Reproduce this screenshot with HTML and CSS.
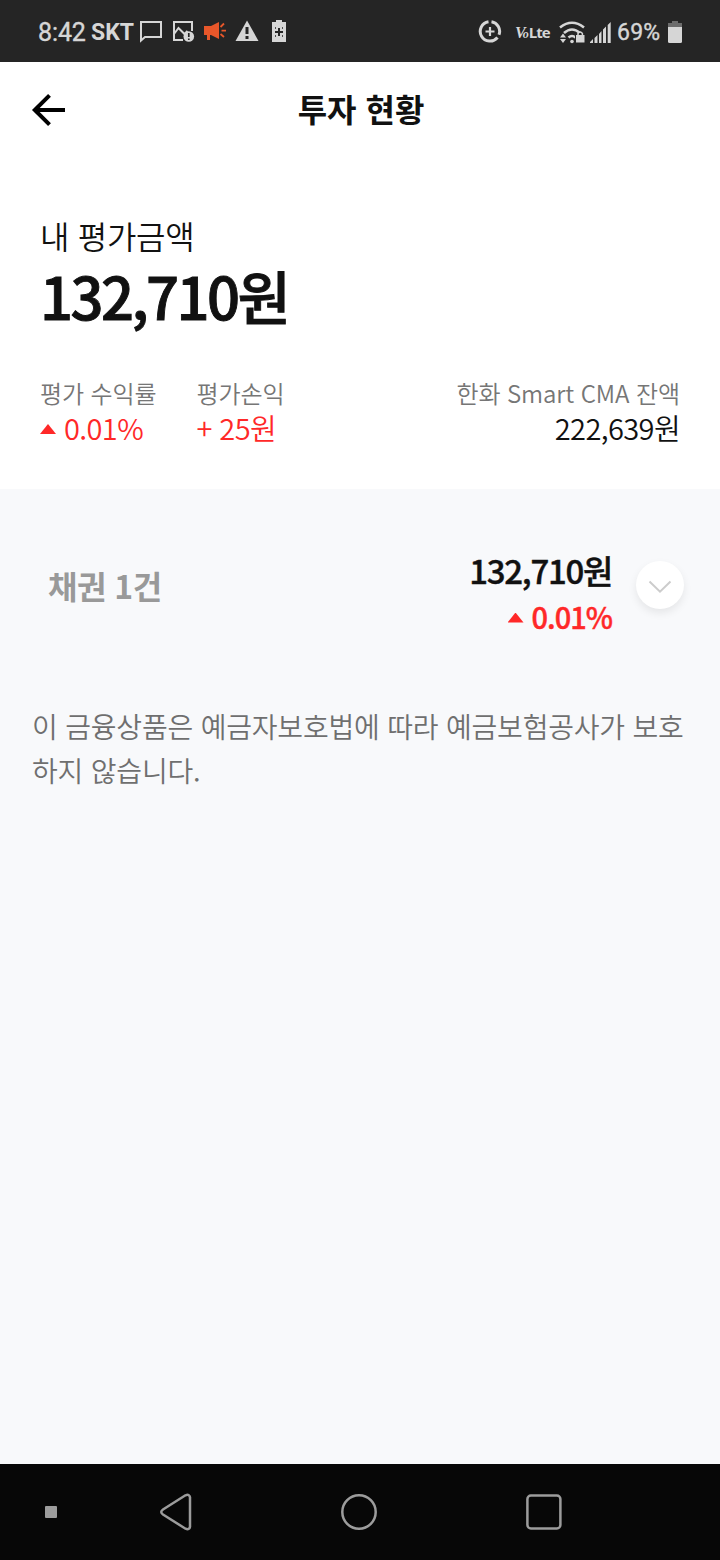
FILE: index.html
```html
<!DOCTYPE html>
<html lang="ko">
<head>
<meta charset="utf-8">
<title>투자 현황</title>
<link rel="stylesheet" href="styles.css">
</head>
<body>
<div class="statusbar">
  <span class="clock">8:42</span>
  <span class="carrier">SKT</span>
  <svg class="status-icons" width="150" height="24" viewBox="139 20 150 24">
    <path d="M141 22h20v15h-16l-4 3.500z" fill="none" stroke="#d6d6d6" stroke-width="2"/>
    <path d="M183 40h-9V22h18v9M174 34l4.500-6 6 6 3-3" fill="none" stroke="#d6d6d6" stroke-width="2"/>
    <circle cx="188.800" cy="36.500" r="5.300" fill="#d6d6d6"/>
    <path d="M188.800 33v4M188.800 38.500v1.500" stroke="#252525" stroke-width="1.700"/>
    <path d="M204 26h7l8-4v17l-8-4h-1v5h-3v-5h-3z" fill="#e8572a"/>
    <path d="M220.500 27l3.500-3.500M221.500 30.700h4.500M220.500 34l3.500 3" stroke="#e8572a" stroke-width="1.800"/>
    <path d="M247 20.500l11.500 20.500h-23z" fill="#d6d6d6"/>
    <path d="M247 27v7M247 36v3" stroke="#252525" stroke-width="3"/>
    <path d="M272 22h4v-2h6v2h4v20h-14z" fill="#d6d6d6"/>
    <path d="M275 32h8M279 28v8" stroke="#252525" stroke-width="2"/>
    <path d="M275 28h1M282 28h1M275 36h1M282 36h1" stroke="#252525" stroke-width="1.500"/>
  </svg>
  <svg class="status-radio" width="134" height="26" viewBox="478 18 134 26">
    <g fill="none" stroke="#d6d6d6">
      <path d="M491.500 20.800a9.700 9.700 0 0 1 7.500 13M497.500 36.500a9.700 9.700 0 1 1-9-15.700" stroke-width="3"/>
      <path d="M485.500 30.500h9M490 26v9" stroke-width="2.200"/>
    </g>
    <text x="515" y="37" class="volte"><tspan class="volte-v">V</tspan><tspan class="volte-o">o</tspan>Lte</text>
    <g fill="none" stroke="#d6d6d6" stroke-width="2.600">
      <path d="M560 26.500q12-9.500 24 0M564 32q8-7 16 0M568.500 36.500q3.500-3 7 0"/>
    </g>
    <circle cx="572" cy="40.500" r="1.800" fill="#d6d6d6"/>
    <path d="M560 36.500l3-4 3 4zM560 38l3 4 3-4z" fill="#d6d6d6"/>
    <path d="M575 32h10v10h-10z" fill="#252525"/>
    <path d="M576 34h8.500v7.500h-8.500z" fill="#d6d6d6"/>
    <path d="M578 34v-1.500q2.200-3 4.400 0V34" fill="none" stroke="#d6d6d6" stroke-width="1.500"/>
    <path d="M590 42v-1l3-3v4zM594.500 42v-5l3-3v8zM599 42v-9l2.500-3v12zM603 42v-13.500l3-3V42zM607.700 42V24l3-3v21z" fill="#d6d6d6"/>
  </svg>
  <span class="battery-level">69%</span>
  <svg class="battery" width="14" height="22" viewBox="0 0 14 22">
    <path d="M0 2h4V0h6v2h4v4H0z" fill="#6c6c6c"/>
    <path d="M0 6h14v14.500q0 1.500-1.500 1.500h-11Q0 22 0 20.500z" fill="#d6d6d6"/>
  </svg>
</div>

<header class="appbar">
  <svg class="back" width="34" height="34" viewBox="0 0 34 34">
    <path d="M18.500 2.300L3.800 17l14.700 14.700M4 17h30" fill="none" stroke="#000" stroke-width="4"/>
  </svg>
  <h1 class="title">투자 현황</h1>
</header>

<section class="summary">
  <div class="summary-label">내 평가금액</div>
  <div class="summary-total">132,710원</div>
  <div class="metrics">
    <div class="metric">
      <div class="metric-label">평가 수익률</div>
      <div class="metric-value up"><i class="triangle"></i>0.01%</div>
    </div>
    <div class="metric">
      <div class="metric-label">평가손익</div>
      <div class="metric-value up">+ 25원</div>
    </div>
    <div class="metric metric-end">
      <div class="metric-label">한화 Smart CMA 잔액</div>
      <div class="metric-value">222,639원</div>
    </div>
  </div>
</section>

<main class="holdings">
  <div class="group">
    <div class="group-name">채권 1건</div>
    <div class="group-values">
      <div class="group-total">132,710원</div>
      <div class="group-rate"><i class="triangle"></i>0.01%</div>
    </div>
    <button class="expand" aria-label="펼치기">
      <svg width="24" height="14" viewBox="0 0 24 14"><path d="M1.500 1.500L12 11.700 22.500 1.500" fill="none" stroke="#ccc" stroke-width="2"/></svg>
    </button>
  </div>
  <p class="notice">이 금융상품은 예금자보호법에 따라 예금보험공사가 보호하지 않습니다.</p>
</main>

<nav class="navbar">
  <i class="nav-dot"></i>
  <svg class="nav-back" width="34" height="38" viewBox="0 0 34 38"><path d="M26.500 2.300L4 16.500q-3.500 2.500 0 5L26.500 35.700q4 1.500 4.500-2V4.300q-.500-3.500-4.500-2z" fill="none" stroke="#9c9c9c" stroke-width="2.500"/></svg>
  <svg class="nav-home" width="38" height="38" viewBox="0 0 38 38"><circle cx="19" cy="19" r="16.700" fill="none" stroke="#9c9c9c" stroke-width="2.500"/></svg>
  <svg class="nav-recent" width="38" height="38" viewBox="0 0 38 38"><rect x="2.400" y="2.500" width="33" height="33" rx="3.500" fill="none" stroke="#9c9c9c" stroke-width="2.500"/></svg>
</nav>
</body>
</html>
```
FILE: styles.css
```css
* { box-sizing: border-box; }
body {
  margin: 0;
  width: 720px;
  height: 1560px;
  display: flex;
  flex-direction: column;
  background: #f8f9fb;
  color: #111;
  font-family: "Noto Sans CJK KR", sans-serif;
  font-weight: 350;
}
svg { display: block; flex: none; }

.statusbar {
  height: 62px;
  flex: none;
  display: flex;
  align-items: center;
  padding: 2px 38px 0;
  background: #252525;
  color: #d6d6d6;
  font: 25px/30px Roboto, sans-serif;
  -webkit-text-stroke: 0.4px #d6d6d6;
}
.clock { width: 53px; padding-top: 2px; letter-spacing: -0.1px; }
.carrier { width: 48px; padding-top: 2px; font-size: 23px; font-weight: 700; -webkit-text-stroke: 0; }
.status-radio { margin-left: 189px; -webkit-text-stroke: 0; }
.volte { fill: #d6d6d6; font: 700 15px "Open Sans", sans-serif; letter-spacing: -0.9px; }
.volte-v { font: italic 700 16px "Liberation Serif", serif; letter-spacing: -3px; }
.volte-o { font: italic 700 12px "Liberation Serif", serif; letter-spacing: 0; }
.battery-level { width: 51px; margin-left: 5px; padding-top: 2px; font-size: 23px; letter-spacing: 0.2px; }

.appbar {
  height: 96px;
  flex: none;
  display: grid;
  grid-template-columns: 67px 1fr 65px;
  align-items: center;
  background: #fff;
}
.back { margin-left: 31px; }
.title {
  margin: 0;
  padding-bottom: 3px;
  text-align: center;
  font-size: 32px;
  line-height: 45px;
  font-weight: 700;
}

.summary {
  height: 331px;
  flex: none;
  padding: 54px 40px 0;
  background: #fff;
}
.summary-label { font-size: 32px; line-height: 46px; letter-spacing: -0.3px; }
.summary-total {
  font-size: 58px;
  line-height: 74px;
  font-weight: 500;
  letter-spacing: -2.600px;
  -webkit-text-stroke: 0.9px #111;
}
.metrics { display: flex; margin-top: 43px; }
.metric { margin-right: 40px; }
.metric-end { margin: 0 0 0 auto; text-align: right; }
.metric-label { color: #767676; font-size: 24px; line-height: 36px; letter-spacing: -0.1px; }
.metric-value { font-size: 29px; line-height: 32px; letter-spacing: -0.600px; }
.up { color: #ff2828; }
.triangle {
  display: inline-block;
  width: 16px;
  height: 10px;
  margin-right: 8px;
  vertical-align: 6px;
  background: #ff2828;
  clip-path: polygon(50% 0, 100% 100%, 0 100%);
}

.holdings { flex: 1; padding-top: 48px; }
.group { display: flex; align-items: center; height: 96px; padding: 0 36px 0 48px; }
.group-name { color: #999; font-size: 32px; font-weight: 700; letter-spacing: -0.5px; }
.group-values {
  margin-left: auto;
  padding-top: 15px;
  text-align: right;
  font-weight: 500;
  -webkit-text-stroke: 0.4px currentColor;
}
.group-total { font-size: 33px; line-height: 46px; letter-spacing: -1.300px; }
.group-rate { color: #ff2828; font-size: 29px; line-height: 46px; letter-spacing: -1px; }
.expand {
  width: 48px;
  height: 48px;
  margin-left: 24px;
  padding: 4px 0 0;
  display: grid;
  place-items: center;
  border: 0;
  border-radius: 50%;
  background: #fff;
  box-shadow: 0 4px 8px rgba(0, 0, 0, .08);
}
.notice {
  margin: 71px 32px 0;
  color: #6f6f6f;
  font-size: 28px;
  line-height: 44px;
  letter-spacing: -0.2px;
  word-break: break-all;
}

.navbar {
  height: 96px;
  flex: none;
  display: flex;
  align-items: center;
  padding-left: 45px;
  background: #070707;
}
.nav-dot { width: 12px; height: 12px; border-radius: 1px; background: #9c9c9c; }
.nav-back { margin-left: 102px; }
.nav-home { margin-left: 147px; }
.nav-recent { margin-left: 147px; }
```
